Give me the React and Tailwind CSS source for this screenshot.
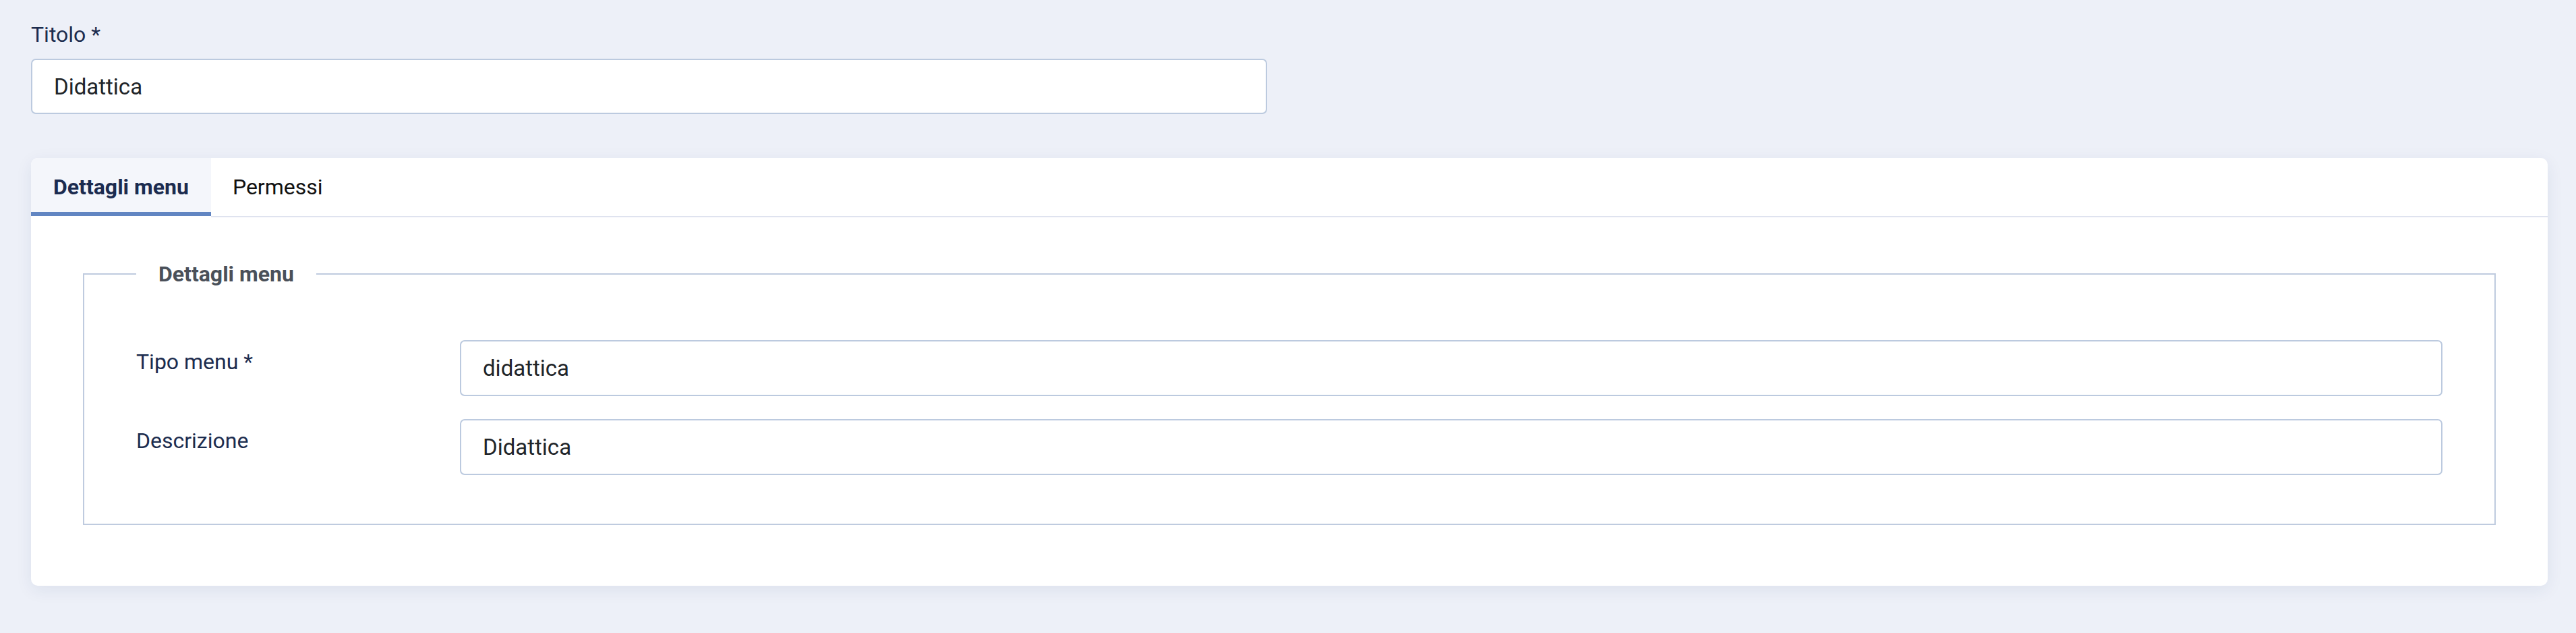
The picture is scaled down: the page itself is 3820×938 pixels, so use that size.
import React from 'react';

const font = "font-['Roboto','Liberation_Sans',sans-serif]";

const Field = ({ label, value, last }) => (
  <div className={`flex items-start ${last ? '' : 'mb-[34px]'}`}>
    <label className="w-[480px] shrink-0 pt-[8px] text-[32px] leading-[48px] text-[#1c2c4e]">{label}</label>
    <input
      readOnly
      value={value}
      className="h-[83px] flex-1 rounded-[7px] border-2 border-[#bccadf] bg-white px-[32px] text-[33px] text-[#212529] outline-none"
    />
  </div>
);

export default function App() {
  return (
    <div className={`min-h-screen w-full bg-[#edf0f8] pl-[46px] pr-[42px] pt-[27px] pb-[60px] ${font}`}>
      {/* Titolo */}
      <label className="block text-[32px] leading-[48px] text-[#1c2c4e]">Titolo *</label>
      <input
        readOnly
        value="Didattica"
        className="mt-[12px] block h-[82px] w-[1833px] rounded-[7px] border-2 border-[#bccadf] bg-white px-[32px] text-[33px] text-[#212529] outline-none"
      />

      {/* Card with tabs */}
      <div className="mt-[65px] rounded-[10px] bg-white shadow-[0_6px_24px_rgba(30,50,100,0.08)]">
        <div className="flex border-b-2 border-[#dfe3ef]">
          <div className="-mb-[2px] flex flex-col">
            <div className="h-[80px] rounded-tl-[10px] bg-[#f4f6fb] px-[33px] pt-[19px] text-[32px] font-bold leading-[48px] text-[#1b2b4f]">
              Dettagli menu
            </div>
            <div className="h-[6px] bg-[#6185c2]" />
            <div className="h-[2px] bg-white" />
          </div>
          <div className="h-[86px] px-[32px] pt-[19px] text-[32px] leading-[48px] text-[#111]">Permessi</div>
        </div>

        <div className="px-[77px] pt-[60px] pb-[90px]">
          <fieldset className="border-2 border-[#bfcbdf] px-[77px] pt-[74px] pb-[72px]">
            <legend className="px-[33px] text-[32px] font-bold leading-[48px] text-[#4a5059]">Dettagli menu</legend>
            <Field label="Tipo menu *" value="didattica" />
            <Field label="Descrizione" value="Didattica" last />
          </fieldset>
        </div>
      </div>
    </div>
  );
}
